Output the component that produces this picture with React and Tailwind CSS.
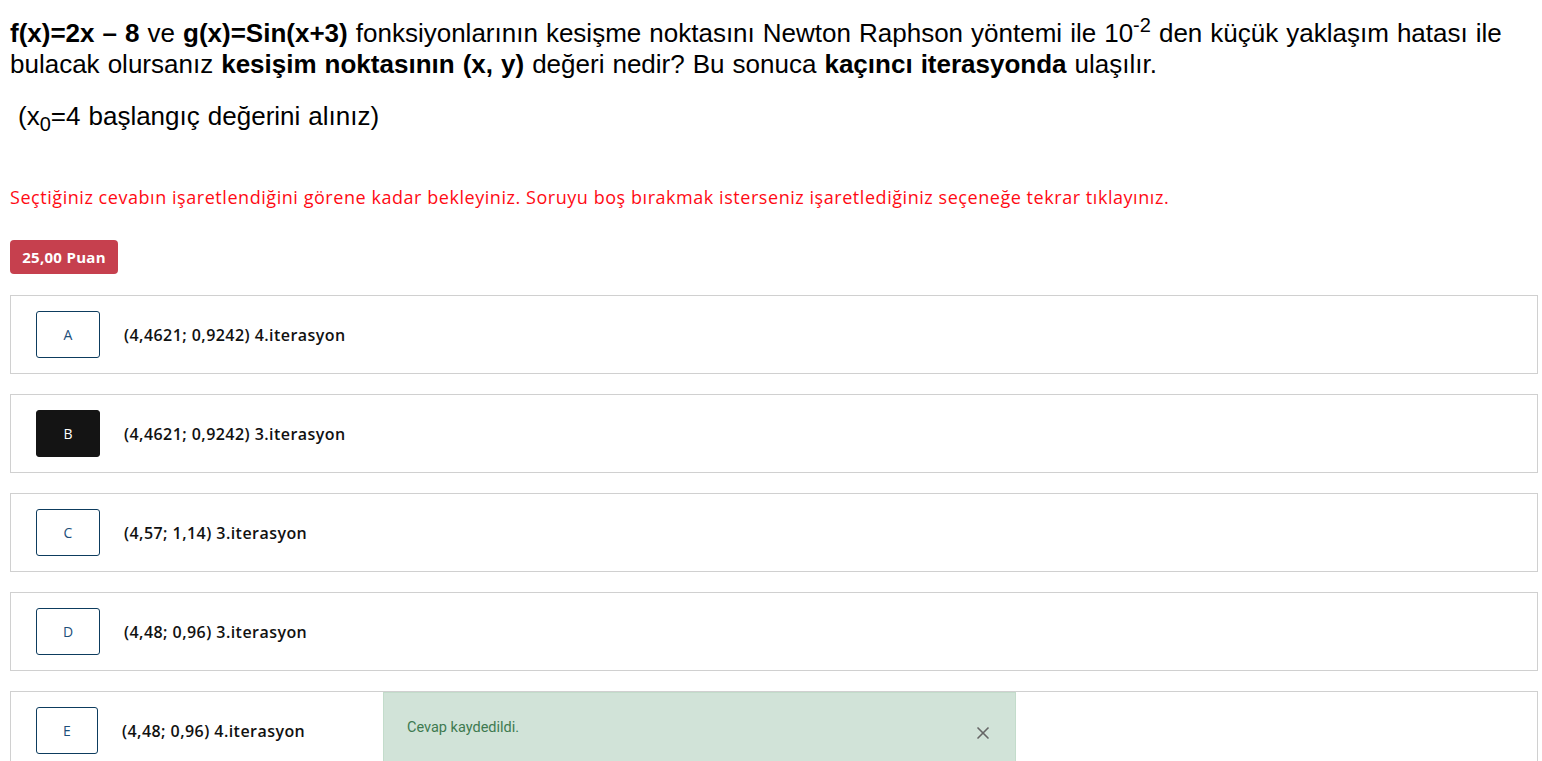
import { X } from "lucide-react";

const options = [
  { key: "A", text: "(4,4621; 0,9242) 4.iterasyon" },
  { key: "B", text: "(4,4621; 0,9242) 3.iterasyon", selected: true },
  { key: "C", text: "(4,57; 1,14) 3.iterasyon" },
  { key: "D", text: "(4,48; 0,96) 3.iterasyon" },
  { key: "E", text: "(4,48; 0,96) 4.iterasyon", narrow: true },
];

const App = () => {
  return (
    <div className="relative min-h-screen bg-white pl-[10px] pr-[4px] pt-[18px] pb-10">
      {/* Question */}
      <div className="pr-[10px] font-['Liberation_Sans',Arial,sans-serif] text-[26px] leading-[31px] text-black [word-spacing:0.8px]">
        <p>
          <b>f(x)=2x – 8</b> ve <b>g(x)=Sin(x+3)</b> fonksiyonlarının kesişme noktasını Newton Raphson yöntemi ile 10
          <sup className="text-[20px] relative -top-[10px]">-2</sup> den küçük yaklaşım hatası ile bulacak olursanız{" "}
          <b>kesişim noktasının (x, y)</b> değeri nedir? Bu sonuca <b>kaçıncı iterasyonda</b> ulaşılır.
        </p>
        <p className="mt-[21px] pl-[8px]">
          (x<sub className="text-[20px] relative top-[6px]">0</sub>=4 başlangıç değerini alınız)
        </p>
      </div>

      {/* Warning */}
      <p className="mt-[53px] font-['Open_Sans','Noto_Sans',sans-serif] text-[18px] leading-[24px] tracking-[0.55px] text-[#ff0a14]">
        Seçtiğiniz cevabın işaretlendiğini görene kadar bekleyiniz. Soruyu boş bırakmak isterseniz işaretlediğiniz seçeneğe tekrar tıklayınız.
      </p>

      {/* Points badge */}
      <div className="mt-[31px] inline-flex h-[34px] w-[108px] items-center justify-center rounded-[4px] bg-[#c6404e] font-['Open_Sans','Noto_Sans',sans-serif] text-[15px] font-bold tracking-[0.3px] text-white">
        25,00 Puan
      </div>

      {/* Options */}
      <div className="mt-[21px] flex flex-col gap-[20px] font-['Open_Sans','Noto_Sans',sans-serif]">
        {options.map((o) => (
          <div
            key={o.key}
            className="flex h-[79px] items-center border border-[#d0d0d0] bg-white pl-[25px]"
          >
            <div
              className={
                (o.narrow ? "w-[62px] " : "w-[64px] ") +
                (o.selected
                  ? "flex h-[47px] items-center justify-center rounded-[3px] border border-[#141414] bg-[#141414] text-[14px] text-white"
                  : "flex h-[47px] items-center justify-center rounded-[3px] border border-[#0d3c5e] bg-white text-[14px] text-[#1d4f7a]")
              }
            >
              {o.key}
            </div>
            <span className="ml-[24px] text-[16px] font-semibold tracking-[0.45px] text-[#111]">{o.text}</span>
          </div>
        ))}
      </div>

      {/* Toast */}
      <div className="absolute left-[383px] top-[692px] flex h-[80px] w-[633px] items-start justify-between border border-[#c3dccb] bg-[#d1e3d8] pl-[23px] pr-[22px] pt-[24px]">
        <span className="font-['Roboto','Noto_Sans',sans-serif] text-[14.5px] text-[#3e7a50]">Cevap kaydedildi.</span>
        <X className="mt-[6px] h-[20px] w-[20px] text-[#666]" strokeWidth={2} />
      </div>
    </div>
  );
};

export default App;
